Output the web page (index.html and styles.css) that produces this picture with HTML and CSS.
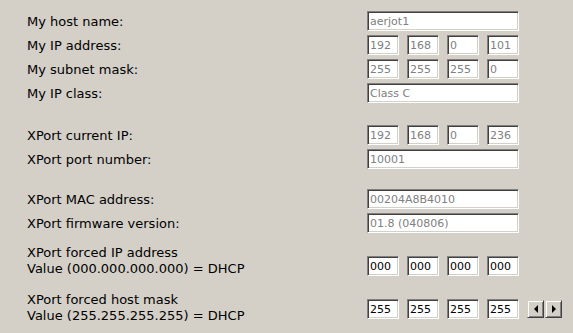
FILE: index.html
```html
<!DOCTYPE html>
<html lang="en">
<head>
    <meta charset="UTF-8">
    <title>XPort Settings</title>
    <link rel="stylesheet" href="styles.css">
</head>
<body>

<div class="group">
    <div class="row">
        <span class="label">My host name:</span>
        <input type="text" class="field wide" value="aerjot1" readonly>
    </div>
    <div class="row">
        <span class="label">My IP address:</span>
        <span class="quad">
            <input type="text" class="field octet" value="192" readonly>
            <input type="text" class="field octet" value="168" readonly>
            <input type="text" class="field octet" value="0" readonly>
            <input type="text" class="field octet" value="101" readonly>
        </span>
    </div>
    <div class="row">
        <span class="label">My subnet mask:</span>
        <span class="quad">
            <input type="text" class="field octet" value="255" readonly>
            <input type="text" class="field octet" value="255" readonly>
            <input type="text" class="field octet" value="255" readonly>
            <input type="text" class="field octet" value="0" readonly>
        </span>
    </div>
    <div class="row">
        <span class="label">My IP class:</span>
        <input type="text" class="field wide" value="Class C" readonly>
    </div>
</div>

<div class="group gap-xport">
    <div class="row">
        <span class="label">XPort current IP:</span>
        <span class="quad">
            <input type="text" class="field octet" value="192" readonly>
            <input type="text" class="field octet" value="168" readonly>
            <input type="text" class="field octet" value="0" readonly>
            <input type="text" class="field octet" value="236" readonly>
        </span>
    </div>
    <div class="row">
        <span class="label">XPort port number:</span>
        <input type="text" class="field wide" value="10001" readonly>
    </div>
</div>

<div class="group gap-mac">
    <div class="row">
        <span class="label">XPort MAC address:</span>
        <input type="text" class="field wide" value="00204A8B4010" readonly>
    </div>
    <div class="row">
        <span class="label">XPort firmware version:</span>
        <input type="text" class="field wide" value="01.8 (040806)" readonly>
    </div>
</div>

<div class="row tall forced-ip">
    <span class="label">XPort forced IP address<br>Value (000.000.000.000) = DHCP</span>
    <span class="quad">
        <input type="text" class="field octet edit" value="000">
        <input type="text" class="field octet edit" value="000">
        <input type="text" class="field octet edit" value="000">
        <input type="text" class="field octet edit" value="000">
    </span>
</div>

<div class="row tall forced-mask">
    <span class="label">XPort forced host mask<br>Value (255.255.255.255) = DHCP</span>
    <span class="quad">
        <input type="text" class="field octet edit" value="255">
        <input type="text" class="field octet edit" value="255">
        <input type="text" class="field octet edit" value="255">
        <input type="text" class="field octet edit" value="255">
    </span>
    <span class="scroll">
        <button class="arrow" type="button"><span class="tri left"></span></button>
        <button class="arrow" type="button"><span class="tri right"></span></button>
    </span>
</div>

</body>
</html>
```

FILE: styles.css
```css
body {
    margin: 0;
    padding: 11px 0 0 27px;
    background-color: #d4d0c8;
    font-family: "DejaVu Sans", Verdana, sans-serif;
    font-size: 13px;
    color: #000;
    overflow: hidden;
}

/* One label + its input(s) */
.row {
    display: flex;
    align-items: center;
    height: 20px;
    margin-bottom: 4px;
}

.label {
    width: 340px;
    flex-shrink: 0;
}

/* margins collapse with the row above, so these are the real gaps */
.gap-xport {
    margin-top: 22px;
}

.gap-mac {
    margin-top: 20px;
}

/* Two-line labels */
.row.tall {
    height: auto;
    align-items: flex-start;
}

.row.tall .label {
    line-height: 16px;
}

.forced-ip {
    margin-top: 12px;
}

.forced-ip .quad {
    margin-top: 11px;
}

.forced-mask {
    margin-top: 15px;
}

.forced-mask .quad,
.forced-mask .scroll {
    margin-top: 7px;
}

/* Sunken classic text boxes */
.field {
    box-sizing: border-box;
    height: 20px;
    margin: 0;
    padding: 0 2px;
    border: 1px solid;
    border-color: #808080 #fff #fff #808080;
    box-shadow: inset 1px 1px #404040, inset -1px -1px #d4d0c8;
    background-color: #fff;
    font-family: "DejaVu Sans", Verdana, sans-serif;
    font-size: 11px;
    color: #808080;
    outline: none;
}

.field.edit {
    color: #000;
}

.wide {
    width: 152px;
}

.quad {
    display: flex;
    gap: 8px;
}

.octet {
    width: 32px;
}

/* Little scroll arrows next to the mask */
.scroll {
    display: flex;
    gap: 1px;
    margin-left: 8px;
    padding-top: 1px;
}

.arrow {
    box-sizing: border-box;
    width: 17px;
    height: 18px;
    padding: 0;
    border: 1px solid;
    border-color: #d4d0c8 #404040 #404040 #d4d0c8;
    box-shadow: inset 1px 1px #fff, inset -1px -1px #808080;
    background-color: #d4d0c8;
    display: flex;
    align-items: center;
    justify-content: center;
}

.tri {
    width: 0;
    height: 0;
    border-top: 4px solid transparent;
    border-bottom: 4px solid transparent;
}

.tri.left {
    border-right: 4px solid #000;
}

.tri.right {
    border-left: 4px solid #000;
}
```
